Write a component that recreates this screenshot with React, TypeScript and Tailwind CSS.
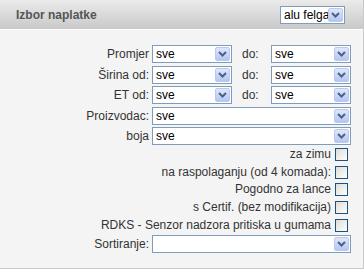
import React from 'react';

const Arrow: React.FC = () => (
  <div className="w-[15px] h-[14px] my-[1px] mr-[1px] rounded-[2px] border border-[#b9c9ef] bg-gradient-to-b from-[#dfe7fb] to-[#b4c6f2] flex items-center justify-center">
    <svg width="9" height="6" viewBox="0 0 9 6">
      <path d="M1 1 L4.5 4.5 L8 1" fill="none" stroke="#4d6185" strokeWidth="2" />
    </svg>
  </div>
);

const Select: React.FC<{ value?: string; className?: string }> = ({ value = '', className = '' }) => (
  <div className={`h-[18px] border border-[#7f9db9] bg-white flex items-center ${className}`}>
    <span className="flex-1 pl-[3px] text-[12px] leading-[16px] text-black whitespace-nowrap overflow-hidden">{value}</span>
    <Arrow />
  </div>
);

const Check: React.FC = () => (
  <div className="w-[13px] h-[13px] border border-[#1c5180] bg-gradient-to-br from-[#dcdcd7] to-white" />
);

const RangeRow: React.FC<{ label: string; h: string }> = ({ label, h }) => (
  <div className={`flex items-start ${h}`}>
    <div className="w-[150px] text-right pr-[1px] text-[12px] leading-[18px]">{label}</div>
    <Select value="sve" className="w-[80px] ml-[2px]" />
    <div className="w-[39px] pl-[10px] text-[12px] leading-[18px]">do:</div>
    <Select value="sve" className="w-[80px]" />
  </div>
);

const FullRow: React.FC<{ label: string; h: string; value?: string }> = ({ label, h, value }) => (
  <div className={`flex items-start ${h}`}>
    <div className="w-[150px] text-right pr-[1px] text-[12px] leading-[18px]">{label}</div>
    <Select value={value} className="w-[199px] ml-[2px]" />
  </div>
);

const CheckRow: React.FC<{ label: string; h: string }> = ({ label, h }) => (
  <div className={`flex items-start justify-end pr-[15px] ${h}`}>
    <span className="text-[12px] leading-[13px] pr-[4px] whitespace-nowrap">{label}</span>
    <Check />
  </div>
);

export default function App() {
  return (
    <div className="w-[364px] h-[271px] bg-white" style={{ fontFamily: '"Liberation Sans", Arial, sans-serif' }}>
      <div className="h-[269px] border-r border-b border-[#c8c8c8] bg-[#f4f4f4] text-[#333]">
        <div className="h-[29px] bg-gradient-to-b from-[#ebebeb] to-[#c9c9c9] flex items-center justify-between pl-[16px] pr-[18px]">
          <span className="text-[12px] font-bold text-[#555]">Izbor naplatke</span>
          <Select value="alu felga" className="w-[65px]" />
        </div>
        <div className="h-[1px] bg-[#ffffff]" />
        <div className="pt-[15px]">
          <RangeRow label="Promjer" h="h-[21px]" />
          <RangeRow label="Širina od:" h="h-[20px]" />
          <RangeRow label="ET od:" h="h-[21px]" />
          <FullRow label="Proizvodac:" h="h-[20px]" value="sve" />
          <FullRow label="boja" h="h-[21px]" value="sve" />
          <CheckRow label="za zimu" h="h-[18px]" />
          <CheckRow label="na raspolaganju (od 4 komada):" h="h-[17px]" />
          <CheckRow label="Pogodno za lance" h="h-[18px]" />
          <CheckRow label="s Certif. (bez modifikacija)" h="h-[18px]" />
          <CheckRow label="RDKS - Senzor nadzora pritiska u gumama" h="h-[16px]" />
          <FullRow label="Sortiranje:" h="h-[18px]" />
        </div>
      </div>
    </div>
  );
}
